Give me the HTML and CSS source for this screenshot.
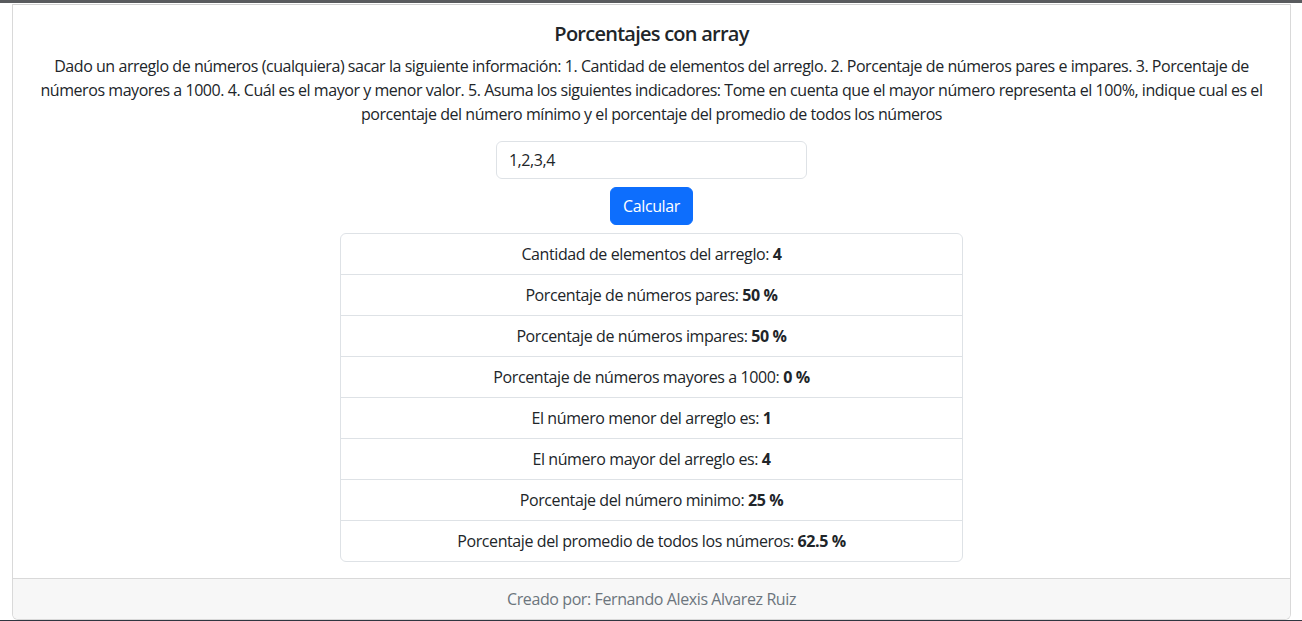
FILE: index.html
```html
<!DOCTYPE html>
<html lang="es">
<head>
<meta charset="utf-8">
<title>Porcentajes con array</title>
<link rel="stylesheet" href="styles.css">
</head>
<body>
<div class="topbar"></div>
<div class="wrap">
  <div class="card">
    <div class="card-body">
      <h5 class="card-title">Porcentajes con array</h5>
      <p class="card-text">Dado un arreglo de números (cualquiera) sacar la siguiente información: 1. Cantidad de elementos del arreglo. 2. Porcentaje de números pares e impares. 3. Porcentaje de números mayores a 1000. 4. Cuál es el mayor y menor valor. 5. Asuma los siguientes indicadores: Tome en cuenta que el mayor número representa el 100%, indique cual es el porcentaje del número mínimo y el porcentaje del promedio de todos los números</p>
      <input class="form-control" type="text" value="1,2,3,4">
      <button class="btn" type="button">Calcular</button>
      <ul class="list-group">
        <li class="list-item">Cantidad de elementos del arreglo: <b>4</b></li>
        <li class="list-item">Porcentaje de números pares: <b>50 %</b></li>
        <li class="list-item">Porcentaje de números impares: <b>50 %</b></li>
        <li class="list-item">Porcentaje de números mayores a 1000: <b>0 %</b></li>
        <li class="list-item">El número menor del arreglo es: <b>1</b></li>
        <li class="list-item">El número mayor del arreglo es: <b>4</b></li>
        <li class="list-item">Porcentaje del número minimo: <b>25 %</b></li>
        <li class="list-item">Porcentaje del promedio de todos los números: <b>62.5 %</b></li>
      </ul>
    </div>
    <div class="card-footer">Creado por: Fernando Alexis Alvarez Ruiz</div>
  </div>
</div>
<div class="bottombar"></div>
</body>
</html>
```
FILE: styles.css
```css
* { box-sizing: border-box; }
html, body { margin: 0; padding: 0; }
body {
  font-family: "Open Sans", "Noto Sans", sans-serif;
  font-size: 16px;
  line-height: 24px;
  letter-spacing: -0.4px;
  color: #212529;
  background: #fff;
  height: 621px;
  overflow: hidden;
  display: flex;
  flex-direction: column;
}
.topbar {
  height: 3px;
  background: #595b5e;
  flex: none;
}
.wrap {
  flex: 1;
  padding: 1px 11px 0 12px;
  display: flex;
  flex-direction: column;
}
.card {
  flex: 1;
  display: flex;
  flex-direction: column;
  border: 1px solid #d9d9d9;
  border-top-color: #d2d2d2;
  border-radius: 0 0 6px 6px;
  overflow: hidden;
}
.card-body {
  flex: 1;
  padding: 17px 16px 16px;
  display: flex;
  flex-direction: column;
  align-items: center;
  text-align: center;
}
.card-title {
  margin: 0 0 8px;
  font-size: 20px;
  line-height: 24px;
  font-weight: 600;
  letter-spacing: -0.75px;
}
.card-text {
  margin: 0 0 15px;
  letter-spacing: -0.45px;
}
.form-control {
  width: 25%;
  height: 38px;
  padding: 6px 12px;
  font: inherit;
  font-size: 16px;
  letter-spacing: -0.4px;
  color: #212529;
  border: 1px solid #dee2e6;
  border-radius: 6px;
  background: #fff;
  outline: none;
}
.btn {
  margin-top: 8px;
  height: 38px;
  padding: 6px 12px;
  font: inherit;
  font-size: 16px;
  letter-spacing: -0.4px;
  color: #fff;
  background: #0d6efd;
  border: 1px solid #0d6efd;
  border-radius: 6px;
}
.list-group {
  margin: 8px 0 0;
  padding: 0;
  list-style: none;
  width: 50%;
  border: 1px solid #dee2e6;
  border-radius: 6px;
}
.list-item {
  padding: 8px 16px;
  border-top: 1px solid #dee2e6;
}
.list-item:first-child { border-top: 0; }
.list-item b { font-weight: 700; }
.card-footer {
  flex: none;
  height: 41px;
  padding: 8px 16px;
  text-align: center;
  color: #6c757d;
  background: #f7f7f7;
  border-top: 1px solid #d9d9d9;
}
.bottombar {
  height: 1px;
  background: #2f3640;
  flex: none;
}
```
